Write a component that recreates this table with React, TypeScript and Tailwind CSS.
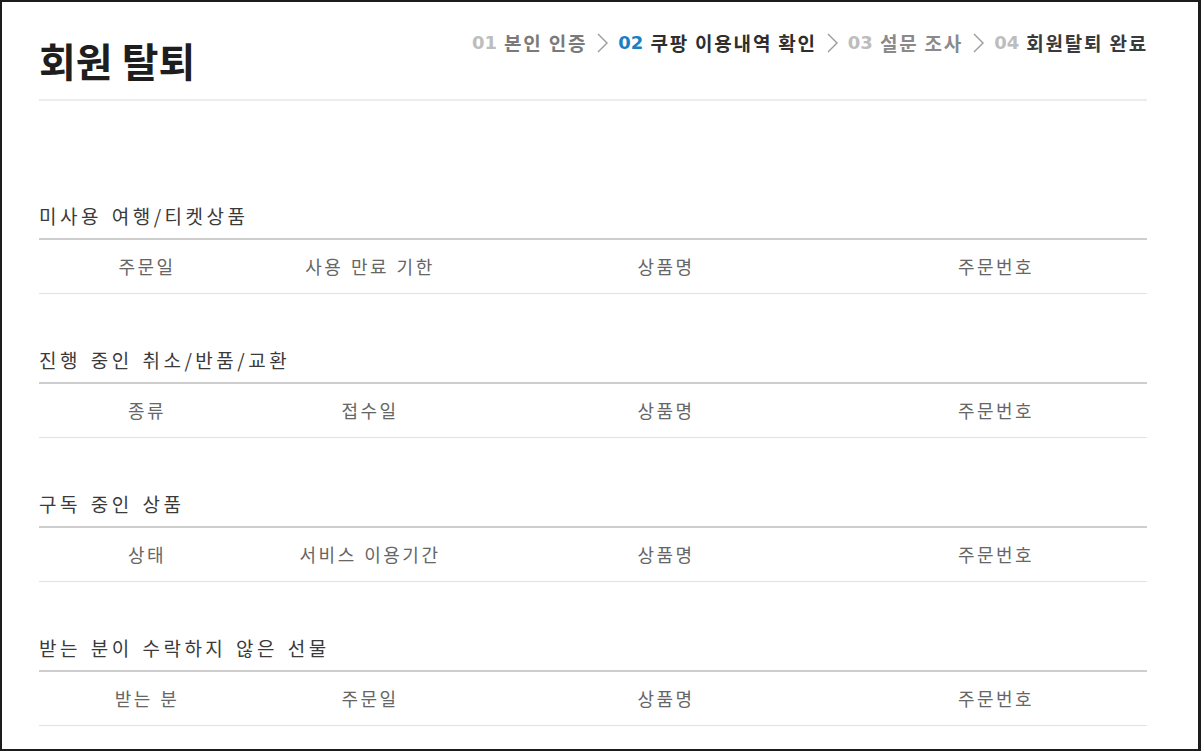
import React from "react";

const sections: { title: string; cols: string[] }[] = [
  { title: "미사용 여행/티켓상품", cols: ["주문일", "사용 만료 기한", "상품명", "주문번호"] },
  { title: "진행 중인 취소/반품/교환", cols: ["종류", "접수일", "상품명", "주문번호"] },
  { title: "구독 중인 상품", cols: ["상태", "서비스 이용기간", "상품명", "주문번호"] },
  { title: "받는 분이 수락하지 않은 선물", cols: ["받는 분", "주문일", "상품명", "주문번호"] },
];

const colW = ["w-[216px]", "w-[230px]", "w-[362px]", "w-[298px]"];

function Chevron() {
  return (
    <svg width="13" height="22" viewBox="0 0 13 22" className="mx-[9px] shrink-0">
      <path d="M2 2 L11 11 L2 20" fill="none" stroke="#9a9a9a" strokeWidth="1.4" />
    </svg>
  );
}

function Step({ num, label, active, labelColor }: { num: string; label: string; active?: boolean; labelColor: string }) {
  return (
    <div className="flex items-center">
      <span
        className={`font-bold text-[18px] leading-[24px] mr-[7px] ${active ? "text-[#1b7fc2]" : "text-[#bdbdbd]"}`}
        style={{ fontFamily: '"DejaVu Sans", sans-serif' }}
      >
        {num}
      </span>
      <span className={`font-bold text-[19px] leading-[24px] tracking-[1.8px] [word-spacing:0px] ${labelColor}`}>{label}</span>
    </div>
  );
}

export default function App() {
  return (
    <div
      className="w-[1201px] h-[751px] border-2 border-r-[3px] border-[#1c1c1c] bg-white overflow-hidden"
      style={{ fontFamily: '"Noto Sans CJK KR", "Noto Sans", sans-serif' }}
    >
      <div className="pl-[37px] w-[1145px]">
        <div className="h-[99px] flex justify-between items-start border-b-2 border-[#ececec]">
          <h1 className="mt-[38px] text-[40px] leading-[40px] font-bold text-[#1e1e1e]">회원 탈퇴</h1>
          <div className="mt-[29px] flex items-center -mr-[1px]">
            <Step num="01" label="본인 인증" labelColor="text-[#7a7a7a]" />
            <Chevron />
            <Step num="02" label="쿠팡 이용내역 확인" active labelColor="text-[#2e2e2e]" />
            <Chevron />
            <Step num="03" label="설문 조사" labelColor="text-[#8a8a8a]" />
            <Chevron />
            <Step num="04" label="회원탈퇴 완료" labelColor="text-[#3a3a3a]" />
          </div>
        </div>
        <div className="pt-[49px]">
          {sections.map((s) => (
            <section key={s.title} className="pt-[54px]">
              <h2 className="text-[19px] leading-[24px] text-[#3a3a3a] tracking-[3.5px] [word-spacing:2px] mb-[10px]">
                {s.title}
              </h2>
              <div className="flex h-[56px] border-t-2 border-[#cdcdcd] border-b border-b-[#e2e2e2]">
                {s.cols.map((c, i) => (
                  <div
                    key={i}
                    className={`${colW[i]} flex items-center justify-center text-[18px] text-[#666] tracking-[2.5px] [word-spacing:1px]`}
                  >
                    {c}
                  </div>
                ))}
              </div>
            </section>
          ))}
        </div>
      </div>
    </div>
  );
}
